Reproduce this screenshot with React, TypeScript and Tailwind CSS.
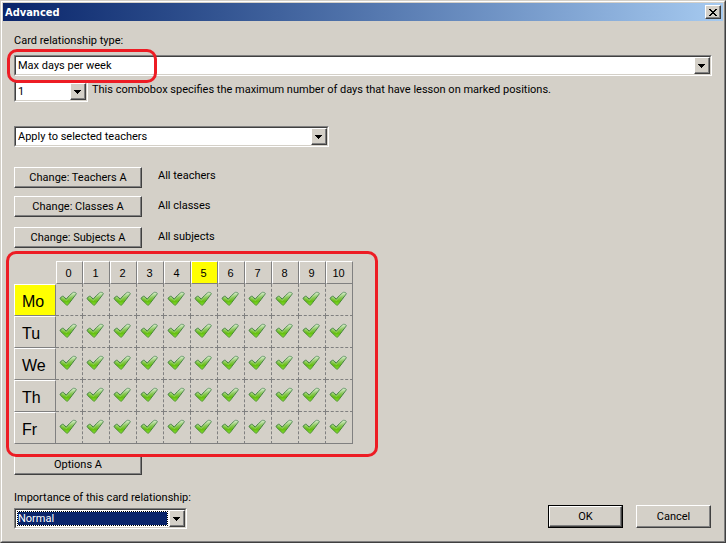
import React, { useState } from "react";
import { clsx } from "clsx";

const days = ["Mo", "Tu", "We", "Th", "Fr"];
const periods = [0, 1, 2, 3, 4, 5, 6, 7, 8, 9, 10];

const raised = "border border-t-white border-l-white border-r-[#404040] border-b-[#404040] shadow-[inset_-1px_-1px_0_#808080]";

type ComboProps = {
  id: string;
  label?: string;
  options: string[];
  className?: string;
  focused?: boolean;
};

const Combo = ({ id, label, options, className, focused }: ComboProps) => (
  <div className={clsx("h-[21px] border border-t-[#808080] border-l-[#808080] border-r-white border-b-white", className)}>
    <div className="flex h-full border border-t-[#404040] border-l-[#404040] border-r-[#d4d0c8] border-b-[#d4d0c8] bg-white">
      <select
        id={id}
        aria-label={label}
        className={clsx(
          "min-w-0 flex-1 appearance-none border outline-none",
          focused ? "m-px border-dotted border-black bg-[#0a246a] bg-clip-padding text-white" : "border-transparent px-px"
        )}
      >
        {options.map(option => (
          <option key={option}>{option}</option>
        ))}
      </select>
      <span aria-hidden="true" className={clsx("flex w-4 items-center justify-center bg-[#d4d0c8] pr-px", raised)}>
        <svg width="7" height="4" viewBox="0 0 7 4" shapeRendering="crispEdges">
          <path d="M0 0h7v1H0zM1 1h5v1H1zM2 2h3v1H2zM3 3h1v1H3z" />
        </svg>
      </span>
    </div>
  </div>
);

const PushButton = ({ children, className }: { children: React.ReactNode; className?: string }) => (
  <button type="button" className={clsx("bg-[#d4d0c8] text-center", raised, className)}>
    {children}
  </button>
);

const Check = () => (
  <svg width="18" height="16" viewBox="0 0 18 16" aria-hidden="true">
    <path
      d="M1.4 8.2 Q.9 7.6 1.4 7 Q2.4 5.4 3.6 5.2 Q4.4 5.1 5 5.8 L7.2 8.2 Q10.2 4.4 13.8 1.6 Q14.5 1.1 15.3 1.3 L16.8 1.8 Q17.6 2.2 17.2 3 Q13 8.6 9 13.8 Q8.1 14.7 7.2 13.8 Z"
      fill="url(#checkFill)"
      stroke="url(#checkEdge)"
      strokeWidth="1"
    />
    <path d="M3 7 Q4 6 4.6 7 L7.2 9.6 Q10.6 5.2 14.6 2.4" fill="none" stroke="#e4f6d4" strokeOpacity=".35" strokeWidth=".8" />
  </svg>
);

const App = () => {
  const [blocked, setBlocked] = useState<string[]>([]);

  const toggle = (key: string) => {
    setBlocked(blocked.includes(key) ? blocked.filter(k => k !== key) : [...blocked, key]);
  };

  return (
    <div className="min-h-screen border border-t-[#d4d0c8] border-l-[#d4d0c8] border-r-[#404040] border-b-[#404040] bg-[#d4d0c8] font-[Tahoma,Roboto,sans-serif] text-[11px] leading-[14px] text-black">
      <svg width="0" height="0" className="absolute" aria-hidden="true">
        <defs>
          <linearGradient id="checkFill" x1="0" y1="0" x2="0" y2="1">
            <stop offset="0" stopColor="#d8ecd0" />
            <stop offset=".4" stopColor="#8cc85c" />
            <stop offset=".7" stopColor="#66c010" />
            <stop offset="1" stopColor="#84e02c" />
          </linearGradient>
          <linearGradient id="checkEdge" x1="0" y1="0" x2="0" y2="1">
            <stop offset="0" stopColor="#6a9a6c" />
            <stop offset=".5" stopColor="#3c7c38" />
            <stop offset="1" stopColor="#5a9c38" />
          </linearGradient>
        </defs>
      </svg>

      <div className="flex min-h-[calc(100vh-2px)] flex-col border border-t-white border-l-white border-r-[#808080] border-b-[#808080] p-px">
        <header className="flex h-[18px] items-center justify-between bg-linear-to-r from-[#0a246a] to-[#a6caf0] px-0.5">
          <h1 className="pt-px font-['DejaVu_Sans_Condensed','DejaVu_Sans',sans-serif] font-bold text-white">Advanced</h1>
          <button type="button" aria-label="Close" className={clsx("flex h-3.5 w-4 items-center justify-center bg-[#d4d0c8]", raised)}>
            <svg width="8" height="7" viewBox="0 0 8 7" shapeRendering="crispEdges">
              <path d="M0 0h2v1H0zM6 0h2v1H6zM1 1h2v1H1zM5 1h2v1H5zM2 2h4v1H2zM3 3h2v1H3zM2 4h4v1H2zM1 5h2v1H1zM5 5h2v1H5zM0 6h2v1H0zM6 6h2v1H6z" />
            </svg>
          </button>
        </header>

        <main className="flex flex-1 flex-col px-[11px] pt-[13px] pb-[11px]">
          <label htmlFor="type">Card relationship type:</label>
          <div className="relative mt-[7px]">
            <Combo id="type" options={["Max days per week"]} />
            <div className="pointer-events-none absolute -top-[6px] -left-[7px] h-[34px] w-[150px] rounded-[10px] border-3 border-[#ed1c24]" />
          </div>

          <div className="mt-[5px] flex items-start gap-1">
            <Combo id="count" options={["1"]} className="w-[74px] shrink-0" />
            <label htmlFor="count" className="mt-0.5">This combobox specifies the maximum number of days that have lesson on marked positions.</label>
          </div>

          <Combo id="scope" label="Apply to" options={["Apply to selected teachers"]} className="mt-6 w-[315px]" />

          <div className="mt-5 flex items-start gap-4">
            <PushButton className="h-[21px] w-32">Change: Teachers A</PushButton>
            <span className="mt-0.5">All teachers</span>
          </div>
          <div className="mt-2 flex items-start gap-4">
            <PushButton className="h-[21px] w-32">Change: Classes A</PushButton>
            <span className="mt-[3px]">All classes</span>
          </div>
          <div className="mt-2.5 flex items-start gap-4">
            <PushButton className="h-[21px] w-32">Change: Subjects A</PushButton>
            <span className="mt-[3px]">All subjects</span>
          </div>

          <div className="relative mt-[13px] w-fit">
            <table className="border-separate border-spacing-0 font-['Liberation_Sans',Arial,sans-serif]">
              <thead>
                <tr>
                  <td className="w-[42px] p-0" />
                  {periods.map(period => (
                    <th
                      key={period}
                      scope="col"
                      className={clsx(
                        "h-[23px] w-[27px] border border-t-white border-l-white border-r-[#808080] border-b-[#808080] p-0 pr-0.5 font-normal",
                        period === 5 && "bg-[#ffff00]"
                      )}
                    >
                      {period}
                    </th>
                  ))}
                </tr>
              </thead>
              <tbody>
                {days.map((day, row) => (
                  <tr key={day}>
                    <th
                      scope="row"
                      className={clsx(
                        "h-8 border border-t-white border-l-white border-r-[#808080] border-b-[#808080] p-0 pt-1 pl-[7px] text-left text-[16px] font-normal",
                        day === "Mo" && "bg-[#ffff00]"
                      )}
                    >
                      {day}
                    </th>
                    {periods.map(period => {
                      const key = `${day}-${period}`;
                      return (
                        <td
                          key={key}
                          className={clsx(
                            "border-r border-b border-[#808080] p-0",
                            period < 10 && "[border-right-style:dashed]",
                            row < 4 && "[border-bottom-style:dashed]"
                          )}
                        >
                          <button
                            type="button"
                            aria-label={`${day} ${period}`}
                            aria-pressed={!blocked.includes(key)}
                            onClick={() => toggle(key)}
                            className="flex h-[31px] w-full items-start pt-[7px] pl-[3px]"
                          >
                            {!blocked.includes(key) && <Check />}
                          </button>
                        </td>
                      );
                    })}
                  </tr>
                ))}
              </tbody>
            </table>
            <div className="pointer-events-none absolute -top-2.5 -right-[25px] -bottom-[13px] -left-2 rounded-[10px] border-3 border-[#ed1c24]" />
          </div>

          <PushButton className="mt-2.5 h-[21px] w-32">Options A</PushButton>

          <div className="mt-auto flex items-end justify-between">
            <div>
              <label htmlFor="importance" className="block">Importance of this card relationship:</label>
              <Combo id="importance" options={["Normal"]} className="mt-[3px] w-[173px]" focused />
            </div>
            <div className="mr-px mb-px flex gap-[13px]">
              <div className="border border-black">
                <PushButton className="block h-[21px] w-[73px]">OK</PushButton>
              </div>
              <PushButton className="h-[23px] w-[75px]">Cancel</PushButton>
            </div>
          </div>
        </main>
      </div>
    </div>
  );
};

export default App;
